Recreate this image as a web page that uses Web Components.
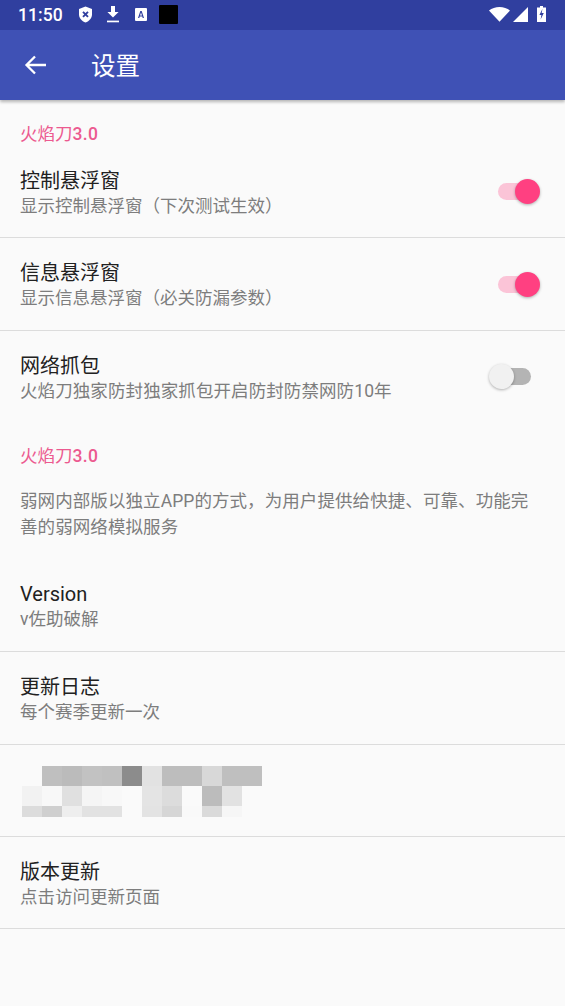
<!DOCTYPE html>
<html lang="zh-CN">
<head>
<meta charset="utf-8">
<title>设置</title>
<style>
html,body{margin:0;padding:0;background:#fafafa}
body{font-family:Roboto,"Noto Sans CJK SC",sans-serif}
pref-category b{font-weight:500;letter-spacing:.4px}
</style>
</head>
<body>
<settings-app>
  <status-bar></status-bar>
  <app-bar>设置</app-bar>
  <pref-category style="--h:46px">火焰刀<b>3.0</b></pref-category>
  <pref-row title="控制悬浮窗" sub="显示控制悬浮窗（下次测试生效）" divider><toggle-switch checked></toggle-switch></pref-row>
  <pref-row title="信息悬浮窗" sub="显示信息悬浮窗（必关防漏参数）" divider><toggle-switch checked></toggle-switch></pref-row>
  <pref-row title="网络抓包" sub="火焰刀独家防封独家抓包开启防封防禁网防10年" wide><toggle-switch></toggle-switch></pref-row>
  <pref-category style="--h:45px">火焰刀<b>3.0</b></pref-category>
  <pref-note>弱网内部版以独立APP的方式，为用户提供给快捷、可靠、功能完善的弱网络模拟服务</pref-note>
  <pref-row title="Version" sub="v佐助破解" divider></pref-row>
  <pref-row title="更新日志" sub="每个赛季更新一次" divider></pref-row>
  <pref-row divider><pixel-block></pixel-block></pref-row>
  <pref-row title="版本更新" sub="点击访问更新页面" divider></pref-row>
</settings-app>
<script>
function def(name, css, html){
  customElements.define(name, class extends HTMLElement{
    connectedCallback(){
      if(this.shadowRoot) return;
      const r=this.attachShadow({mode:'open'});
      r.innerHTML='<style>'+css+'</style>'+(typeof html==='function'?html(this):html);
    }
  });
}
def('settings-app',
 ':host{display:flex;flex-direction:column;width:565px;height:1006px;overflow:hidden;background:#fafafa;font-family:Roboto,"Noto Sans CJK SC",sans-serif}',
 '<slot></slot>');
def('status-bar',
 `:host{display:flex;align-items:center;height:30px;background:#303f9f;color:#fff;padding:0 18px;box-sizing:border-box;position:relative;z-index:2;flex:none}
  .t{font:500 17.5px/30px Roboto,sans-serif;width:60px;letter-spacing:.1px}
  svg,.blk{display:block;flex:none;margin-top:-2px}
  .sp{flex:1}
  .blk{width:19px;height:19px;background:#000;border-radius:1px;margin-left:12px}`,
 `<span class="t">11:50</span>
  <svg width="15" height="17" viewBox="0 0 15 17"><path d="M7.5 0.5 14 3v5.2c0 3.8-2.700 6.900-6.500 8.300C3.700 15.100 1 12 1 8.200V3z" fill="#fff"/><path d="M5 5.800l5 5M10 5.800l-5 5" stroke="#303f9f" stroke-width="1.900"/></svg>
  <svg width="14" height="17" viewBox="0 0 14 17" style="margin-left:13px"><path d="M5 0h4v6h3.600L7 11.600 1.400 6H5z" fill="#fff"/><rect x="1" y="14.600" width="12" height="1.700" fill="#fff"/></svg>
  <svg width="12" height="13" viewBox="0 0 12 13" style="margin-left:15px"><rect width="12" height="13" rx="1" fill="#fff"/><path d="M3 10 5.300 3h1.400L9 10H7.700l-.4-1.400H4.700L4.300 10zM5 7.500h2L6 4.600z" fill="#303f9f"/></svg>
  <span class="blk"></span>
  <span class="sp"></span>
  <svg width="21" height="15" viewBox="0 0 21 15"><path d="M10.500 14.800 0 3.600C2.800 1.400 6.500 0 10.500 0s7.700 1.400 10.500 3.600z" fill="#fff"/></svg>
  <svg width="15" height="15" viewBox="0 0 15 15" style="margin-left:3px"><path d="M0 15 15 0v15z" fill="#fff"/></svg>
  <svg width="9" height="16" viewBox="0 0 9 16" style="margin-left:9px;margin-right:1px"><path d="M3 0h3v1.500h3V16H0V1.500h3z" fill="#fff"/><path d="M5.400 3 2.400 9h2l-.8 4.500L6.800 7H4.700z" fill="#303f9f"/></svg>`);
def('app-bar',
 `:host{display:flex;align-items:center;height:70px;background:#3f51b5;color:#fff;flex:none;position:relative;z-index:1;box-shadow:0 2px 3px rgba(0,0,0,.28);padding-left:24px;font:400 24.500px/70px Roboto,"Noto Sans CJK SC",sans-serif}
  svg{display:block;margin-right:44px;flex:none}
  span{display:block;padding-top:3px}`,
 `<svg width="23" height="22" viewBox="0 0 23 22"><path d="M22 11H3M11 2.500 2.500 11l8.500 8.500" fill="none" stroke="#fff" stroke-width="2.300"/></svg><span><slot></slot></span>`);
def('pref-category',
 `:host{display:flex;align-items:flex-end;height:var(--h);box-sizing:border-box;padding:0 20px;color:#ec5a90;font:400 17.500px/24px Roboto,"Noto Sans CJK SC",sans-serif;flex:none}
  span{display:block}`,
 `<span><slot></slot></span>`);
def('pref-note',
 `:host{display:block;flex:none;box-sizing:border-box;height:91.600px;padding:20px 30px 0 20px;color:#7d7d7d;letter-spacing:.08px;font:400 17.500px/26px Roboto,"Noto Sans CJK SC",sans-serif}`,
 `<slot></slot>`);
def('pref-row',
 `:host{display:flex;flex:none;align-items:center;height:92.400px;box-sizing:border-box;padding:0 25px 0 20px}
  :host([divider]){border-bottom:1px solid #dcdcdc}
  .txt{flex:1;min-width:0;padding-top:2px}
  .t{font:400 20px/26px Roboto,"Noto Sans CJK SC",sans-serif;color:#212121}
  .s{font:400 17.500px/24px Roboto,"Noto Sans CJK SC",sans-serif;color:#7d7d7d}
  :host([wide]) .s{letter-spacing:.09px}`,
 h=>{
   const t=h.getAttribute('title'), s=h.getAttribute('sub');
   return t?`<div class="txt"><div class="t">${t}</div><div class="s">${s}</div></div><slot></slot>`:`<slot></slot>`;
 });
def('toggle-switch',
 `:host{display:block;position:relative;width:42px;height:26px;flex:none;margin-top:1px}
  .track{position:absolute;left:0;top:4px;width:33px;height:17px;border-radius:9px;background:#fbc4d7}
  .thumb{position:absolute;right:0;top:0;width:25px;height:25px;border-radius:50%;background:#ff4081;box-shadow:0 1px 3px rgba(0,0,0,.3)}
  :host(:not([checked])) .track{background:#b4b4b4}
  :host(:not([checked])) .thumb{right:auto;left:-9px;background:#f1f1f1}`,
 `<div class="track"></div><div class="thumb"></div>`);
const rows=[
 ['fafafa','bfbfbf','bbbbbb','c2c2c2','c0c0c0','8c8c8c','e2e2e2','bdbdbd','bdbdbd','d8d8d8','bfbfbf','bfbfbf'],
 ['f2f2f2','f8f8f8','e0e0e0','f5f5f5','f8f8f8','fafafa','e4e4e4','dcdcdc','fafafa','bcbcbc','e2e2e2','fafafa'],
 ['dcdcdc','cfcfcf','eeeeee','e2e2e2','e2e2e2','fafafa','e3e3e3','d6d6d6','f9f9f9','dadada','f6f6f6','fafafa']];
def('pixel-block',
 `:host{display:grid;grid-template-columns:repeat(12,20px);grid-template-rows:20px 20px 11px;margin-left:2px;margin-top:3px}
  i{display:block}`,
 rows.flat().map(c=>`<i style="background:#${c}"></i>`).join(''));
</script>
</body>
</html>
